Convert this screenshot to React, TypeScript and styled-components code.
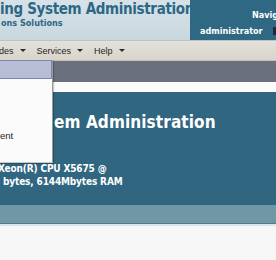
import styled, { createGlobalStyle } from 'styled-components';

const GlobalStyle = createGlobalStyle`
  html, body {
    margin: 0;
    padding: 0;
    background: #f7f7f7;
    overflow: hidden;
  }
`;

const boldFont = `'DejaVu Sans Condensed', 'DejaVu Sans', sans-serif`;

function App() {
  return (
    <Page>
      <GlobalStyle />
      <Header>
        <TitleBlock>
          <Title>ing System Administration</Title>
          <Subtitle>ons Solutions</Subtitle>
        </TitleBlock>
        <UserBlock>
          <NavLabel>Navig</NavLabel>
          <UserRow>
            <UserName>administrator</UserName>
            <UserMark />
          </UserRow>
        </UserBlock>
      </Header>
      <MenuBar>
        <MenuItem>des<Caret /></MenuItem>
        <MenuItem>Services<Caret /></MenuItem>
        <MenuItem>Help<Caret /></MenuItem>
      </MenuBar>
      <ToolStrip />
      <Gap />
      <Banner>
        <BannerTitle>em Administration</BannerTitle>
        <BannerInfo>
          <InfoLine $offset={-2}>Xeon(R) CPU X5675 @</InfoLine>
          <InfoLine $offset={3}>bytes, 6144Mbytes RAM</InfoLine>
        </BannerInfo>
      </Banner>
      <Band />
      <Footer />
      <Dropdown>
        <DropItem $active />
        <DropItem />
        <DropItem />
        <DropItem />
        <DropItem>ent</DropItem>
      </Dropdown>
    </Page>
  );
}

export default App;

const Page = styled.div`
  position: relative;
  width: 276px;
  height: 260px;
  overflow: hidden;
  background: #f7f7f7;
`;

const Header = styled.div`
  display: flex;
  height: 40px;
  border-bottom: 1px solid #b9c3c8;
`;

const TitleBlock = styled.div`
  width: 190px;
  flex-shrink: 0;
  background: linear-gradient(180deg, #d6e2e8 0%, #c9d7df 100%);
  padding-top: 1px;
  overflow: hidden;
  white-space: nowrap;
`;

const Title = styled.div`
  font-family: ${boldFont};
  font-stretch: condensed;
  font-weight: bold;
  font-size: 15px;
  letter-spacing: -0.35px;
  line-height: 17px;
  color: #2c6885;
`;

const Subtitle = styled.div`
  font-family: ${boldFont};
  font-stretch: condensed;
  font-weight: bold;
  font-size: 9px;
  line-height: 10px;
  color: #2c6885;
  margin-left: 1px;
`;

const UserBlock = styled.div`
  flex: 1;
  background: #2f6883;
  color: #ffffff;
  font-family: ${boldFont};
  font-stretch: condensed;
  font-weight: bold;
  font-size: 9px;
  white-space: nowrap;
  overflow: hidden;
  padding-top: 10px;
`;

const NavLabel = styled.div`
  line-height: 10px;
  padding-left: 62px;
`;

const UserRow = styled.div`
  display: flex;
  align-items: center;
  gap: 10px;
  margin-top: 6px;
  padding-left: 10px;
`;

const UserName = styled.span`
  line-height: 10px;
`;

const UserMark = styled.span`
  width: 6px;
  height: 8px;
  background: #1c2a33;
  flex-shrink: 0;
`;

const MenuBar = styled.div`
  display: flex;
  align-items: center;
  gap: 11px;
  height: 19px;
  background: linear-gradient(180deg, #e4e1da 0%, #d8d4cc 100%);
  border-bottom: 1px solid #c4c0b8;
  font-family: 'Liberation Sans', sans-serif;
  font-size: 9px;
  color: #1f1f1f;
`;

const MenuItem = styled.span`
  display: flex;
  align-items: center;
  &:first-child {
    margin-left: -1px;
  }
`;

const Caret = styled.span`
  width: 0;
  height: 0;
  margin-left: 6px;
  border-left: 3px solid transparent;
  border-right: 3px solid transparent;
  border-top: 3px solid #2a2a2a;
`;

const ToolStrip = styled.div`
  height: 21px;
  background: #6b707d;
`;

const Gap = styled.div`
  height: 10px;
  background: #fbfbfb;
`;

const Banner = styled.div`
  height: 113px;
  background: #30667f;
  color: #ffffff;
  font-family: ${boldFont};
  font-stretch: condensed;
  font-weight: bold;
  overflow: hidden;
  white-space: nowrap;
`;

const BannerTitle = styled.div`
  font-size: 17px;
  letter-spacing: 0.1px;
  line-height: 20px;
  margin-top: 20px;
  padding-left: 54px;
`;

const BannerInfo = styled.div`
  margin-top: 30px;
  font-size: 10px;
  line-height: 13px;
  letter-spacing: -0.15px;
`;

const InfoLine = styled.div<{ $offset?: number }>`
  margin-left: ${({ $offset }) => ($offset ? `${$offset}px` : '0')};
`;

const Band = styled.div`
  height: 18px;
  background: #6f97a6;
  border-bottom: 1px solid #557b89;
`;

const Footer = styled.div`
  height: 2px;
  background: #d5e6ee;
`;

const Dropdown = styled.div`
  position: absolute;
  top: 60px;
  left: 0;
  width: 52px;
  height: 102px;
  background: #fbfbfb;
  border-right: 1px solid #9a9a9a;
  border-bottom: 1px solid #c9c9c9;
  box-shadow: 1px 1px 1px rgba(0, 0, 0, 0.2);
  font-family: 'Liberation Sans', sans-serif;
  font-size: 9.5px;
  color: #1f1f1f;
`;

const DropItem = styled.div<{ $active?: boolean }>`
  height: ${({ $active }) => ($active ? '17px' : '15px')};
  line-height: 15px;
  background: ${({ $active }) => ($active ? '#b7bed4' : 'transparent')};
  border: ${({ $active }) => ($active ? '1px solid #7c88b4' : 'none')};
  border-left: none;
  margin-bottom: ${({ $active }) => ($active ? '4px' : '0')};
`;
